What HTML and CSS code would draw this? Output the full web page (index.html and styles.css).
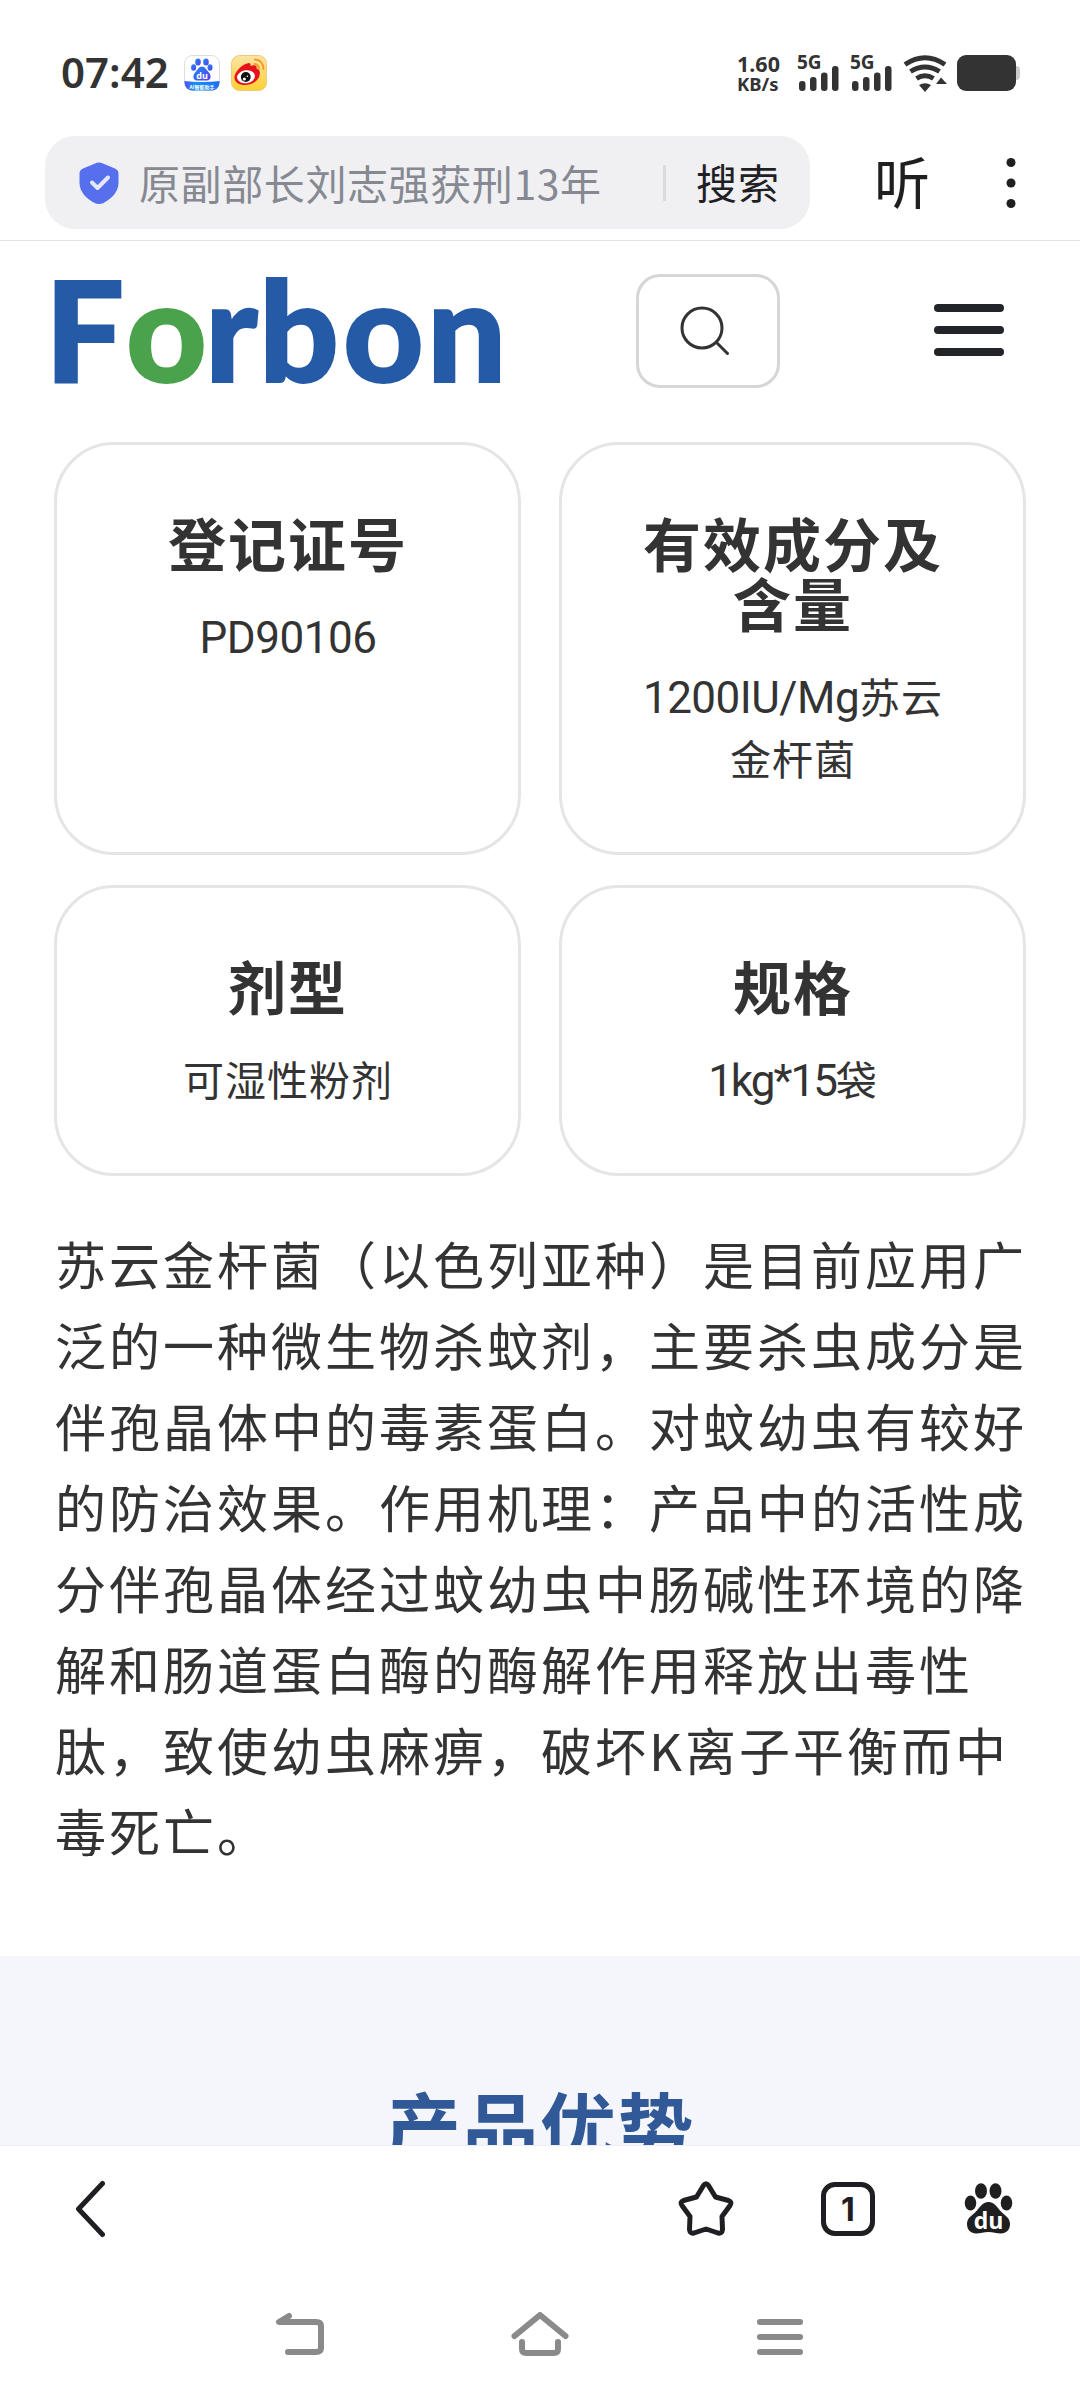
FILE: index.html
```html
<!DOCTYPE html>
<html lang="zh-CN">
<head>
  <meta charset="UTF-8">
  <meta name="viewport" content="width=device-width, initial-scale=1.0">
  <title>Forbon</title>
  <link rel="stylesheet" href="styles.css">
</head>
<body>
  <div class="screen">
    <div class="status-bar">
      <span class="clock">07:42</span>
      <svg class="app-icon" width="36" height="36" viewBox="0 0 36 36">
        <defs>
          <linearGradient id="du-paw" x1="0" y1="0" x2="1" y2="1">
            <stop offset="0" stop-color="#1a8cf5"/>
            <stop offset="1" stop-color="#5a3df0"/>
          </linearGradient>
          <linearGradient id="du-band" x1="0" y1="0" x2="1" y2="0">
            <stop offset="0" stop-color="#5a4cf0"/>
            <stop offset="0.3" stop-color="#1590f5"/>
            <stop offset="1" stop-color="#1f6df5"/>
          </linearGradient>
          <clipPath id="du-clip"><rect x="0.5" y="0.5" width="35" height="35" rx="8"/></clipPath>
        </defs>
        <rect x="0.5" y="0.5" width="35" height="35" rx="8" fill="#fff" stroke="#ddd"/>
        <path clip-path="url(#du-clip)" d="M0 26Q18 28 36 26V36H0Z" fill="url(#du-band)"/>
        <g fill="url(#du-paw)">
          <ellipse cx="14" cy="7" rx="2.8" ry="3.6"/>
          <ellipse cx="22" cy="7" rx="2.8" ry="3.6"/>
          <ellipse cx="9.6" cy="12.5" rx="2.5" ry="3.2"/>
          <ellipse cx="26" cy="12.5" rx="2.5" ry="3.2"/>
          <path d="M18 11.500c-3 0-4 3-6.500 5.500-3 3-3 8.500 1.500 8.500 3 0 7 0 10 0 4.500 0 4.500-5.500 1.500-8.500-2.500-2.500-3.500-5.500-6.500-5.500z"/>
        </g>
        <text x="18" y="23.500" class="du-small">du</text>
        <text x="18" y="33.500" class="du-band-text">AI智能助手</text>
      </svg>
      <svg class="app-icon" width="36" height="36" viewBox="0 0 36 36">
        <defs>
          <linearGradient id="wb-bg" x1="0" y1="0" x2="0" y2="1">
            <stop offset="0" stop-color="#fbe4a6"/>
            <stop offset="1" stop-color="#fdd12f"/>
          </linearGradient>
        </defs>
        <rect x="0.5" y="0.5" width="35" height="35" rx="8" fill="url(#wb-bg)" stroke="#eccb7a"/>
        <path d="M16 8.500c3-1.500 4 .5 3.500 2.500 3-1.500 7-1 6 2.500 3 1 4 3 3 7-1.500 6-8 9.500-14.500 9.500-6 0-11-3-10.500-8 .5-5.500 7-12 12.500-13.500z" fill="#e8121c"/>
        <ellipse cx="15" cy="21.800" rx="9" ry="6.500" fill="#fff" transform="rotate(-8 15 21.800)"/>
        <circle cx="14.800" cy="22" r="4.900" fill="#111"/>
        <circle cx="13.400" cy="24" r="1.500" fill="#fff"/>
        <circle cx="16.400" cy="21.300" r=".8" fill="#fff"/>
        <path d="M24 4.500q8 .5 8.500 9.500M23.500 9q4 .5 4.500 4.500" fill="none" stroke="#f29a2e" stroke-width="2" stroke-linecap="round"/>
      </svg>
      <div class="status-right">
        <div class="net-speed"><span>1.60</span><span>KB/s</span></div>
        <div class="signal">
          <span class="signal-label">5G</span>
          <svg width="42" height="38" viewBox="0 0 42 38" fill="#333">
            <rect x="2" y="27" width="6.500" height="10" rx="3"/>
            <rect x="13" y="23" width="6.500" height="14" rx="3"/>
            <rect x="24" y="18.500" width="6.500" height="18.500" rx="3"/>
            <rect x="35" y="12" width="6.500" height="25" rx="3"/>
          </svg>
        </div>
        <div class="signal">
          <span class="signal-label">5G</span>
          <svg width="42" height="38" viewBox="0 0 42 38" fill="#333">
            <rect x="2" y="27" width="6.500" height="10" rx="3"/>
            <rect x="13" y="23" width="6.500" height="14" rx="3"/>
            <rect x="24" y="18.500" width="6.500" height="18.500" rx="3"/>
            <rect x="35" y="12" width="6.500" height="25" rx="3"/>
          </svg>
        </div>
        <svg class="wifi" width="45" height="37" viewBox="0 0 45 37">
          <path d="M2 9.500Q22 -4 42 9.500M7.500 16.500Q22 7.500 36.500 16.500M13.500 23.500Q22 18 30.500 23.500" fill="none" stroke="#333" stroke-width="5"/>
          <path d="M16 30Q22 26.500 28 30L22 37ZM33 29L38 22.500L44 29Z" fill="#333"/>
        </svg>
        <div class="battery"></div>
        <div class="battery-tip"></div>
      </div>
    </div>

    <div class="browser-bar">
      <div class="search-box">
        <svg class="shield" width="40" height="42" viewBox="0 0 40 42">
          <path d="M16 1.500Q20-.5 24 1.500L36 6.500Q39.500 8 39.500 11.500V21C39.500 31 31 37.500 24.500 41Q20 43 15.500 41C9 37.500.5 31 .5 21V11.500Q.5 8 4 6.500Z" fill="#566fed"/>
          <path d="M13 20.500L18.500 26L29 15.500" fill="none" stroke="#e3e8ff" stroke-width="4" stroke-linecap="round" stroke-linejoin="round"/>
        </svg>
        <span class="search-text">原副部长刘志强获刑13年</span>
        <span class="search-divider"></span>
        <span class="search-btn">搜索</span>
      </div>
      <span class="listen">听</span>
      <svg class="more" width="10" height="52" viewBox="0 0 10 52" fill="#1f1f1f">
        <circle cx="5" cy="5.500" r="4.500"/>
        <circle cx="5" cy="26" r="4.500"/>
        <circle cx="5" cy="46.500" r="4.500"/>
      </svg>
    </div>

    <div class="site-header">
      <svg class="logo" width="460" height="130" viewBox="0 0 460 130">
        <text class="logo-text" x="-9 72 151 205 289 373" y="108">F<tspan class="logo-green">o</tspan>rbon</text>
      </svg>
      <button class="site-search">
        <svg width="50" height="50" viewBox="0 0 50 50" fill="none" stroke="#333" stroke-width="3" stroke-linecap="round">
          <circle cx="22" cy="22" r="20"/>
          <path d="M36.500 36.500L47.500 47.500"/>
        </svg>
      </button>
      <div class="hamburger"><span></span><span></span><span></span></div>
    </div>

    <div class="content">
      <div class="cards">
        <div class="card">
          <h3>登记证号</h3>
          <p><span class="latin">PD90106</span></p>
        </div>
        <div class="card">
          <h3>有效成分及<br>含量</h3>
          <p><span class="latin">1200IU/Mg</span>苏云<br>金杆菌</p>
        </div>
        <div class="card">
          <h3>剂型</h3>
          <p>可湿性粉剂</p>
        </div>
        <div class="card">
          <h3>规格</h3>
          <p><span class="latin spec">1kg*15</span>袋</p>
        </div>
      </div>
      <p class="intro">苏云金杆菌（以色列亚种）是目前应用广<br>泛的一种微生物杀蚊剂，主要杀虫成分是<br>伴孢晶体中的毒素蛋白。对蚊幼虫有较好<br>的防治效果。作用机理：产品中的活性成<br>分伴孢晶体经过蚊幼虫中肠碱性环境的降<br>解和肠道蛋白酶的酶解作用释放出毒性<br>肽，致使幼虫麻痹，破坏K离子平衡而中<br>毒死亡。</p>
    </div>

    <div class="advantage">
      <h2>产品优势</h2>
    </div>

    <div class="toolbar">
      <svg width="30" height="58" viewBox="0 0 30 58" fill="none" stroke="#1f1f23" stroke-width="5" stroke-linecap="round" stroke-linejoin="round">
        <path d="M27.500 3.500L3.500 29L27.500 54.500"/>
      </svg>
      <div class="toolbar-right">
        <svg width="56" height="56" viewBox="0 0 56 56" fill="none" stroke="#1f1f23" stroke-width="5" stroke-linejoin="round">
          <path d="M25.500 4.500Q28 1 30.500 4.500L37.500 16L50.500 19.500Q54.500 21 52 24.500L44 35.500L44.500 48.500Q44 53 40 52L28 48L16 52Q12 53 11.500 48.500L12 35.500L4 24.500Q1.500 21 5.500 19.500L18.500 16Z"/>
        </svg>
        <div class="tab-count">1</div>
        <svg class="paw" width="50" height="54" viewBox="0 0 50 54" fill="#1f1f1f">
          <ellipse cx="17" cy="9" rx="6" ry="7.800"/>
          <ellipse cx="31.500" cy="9" rx="6" ry="7.800"/>
          <ellipse cx="6.500" cy="21" rx="5.800" ry="7.500"/>
          <ellipse cx="42.500" cy="21" rx="5.800" ry="7.500"/>
          <path d="M24.500 20c-6 0-9 6-13 10C7.500 34 3 36 3 42c0 6 4 9.500 9 9.500 5 0 7.500-1.500 12.500-1.500s7.500 1.500 12.500 1.500c5 0 9-3.500 9-9.500 0-6-4.500-8-8.500-12-4-4-7-10-13-10z"/>
          <text x="24.500" y="46.500" class="du-text">du</text>
        </svg>
      </div>
    </div>

    <div class="nav-bar">
      <svg width="50" height="44" viewBox="0 0 50 44" fill="none" stroke="#8a8a8a" stroke-width="6" stroke-linecap="round" stroke-linejoin="round">
        <path d="M14 4L4 10H41Q46 10 46 14V36Q46 40 41 40H13"/>
      </svg>
      <svg class="nav-home" width="60" height="46" viewBox="0 0 60 46" fill="none" stroke="#8a8a8a" stroke-width="6" stroke-linecap="round" stroke-linejoin="round">
        <path d="M4.500 24L30 3L55.500 24M12 30V37Q12 41 16 41H44Q48 41 48 37V30"/>
      </svg>
      <div class="nav-menu"><span></span><span></span><span></span></div>
    </div>
  </div>
</body>
</html>
```
FILE: styles.css
```css
* {
  margin: 0;
  padding: 0;
  box-sizing: border-box;
}

body {
  font-family: 'Noto Sans CJK SC', sans-serif;
  background: #ffffff;
  color: #333333;
}

svg {
  display: block;
  flex-shrink: 0;
}

.screen {
  width: 1080px;
  height: 2400px;
  display: flex;
  flex-direction: column;
  overflow: hidden;
  background: #ffffff;
}

/* phone status bar */
.status-bar {
  height: 110px;
  padding: 35px 60px 0 61px;
  display: flex;
  align-items: flex-start;
  flex-shrink: 0;
}

.clock {
  width: 123px;
  height: 74px;
  line-height: 74px;
  font-family: 'Noto Sans', sans-serif;
  font-size: 42px;
  font-weight: 600;
}

.app-icon {
  margin-top: 20px;
  margin-right: 11px;
}

.du-small {
  font: 700 9px 'Noto Sans', sans-serif;
  fill: #ffffff;
  text-anchor: middle;
}

.du-band-text {
  font: 700 5px 'Noto Sans CJK SC', sans-serif;
  fill: #ffffff;
  text-anchor: middle;
}

.status-right {
  margin-left: auto;
  margin-top: 19px;
  display: flex;
}

.net-speed {
  width: 60px;
  display: flex;
  flex-direction: column;
  font-family: 'Noto Sans', sans-serif;
  font-weight: 700;
  font-size: 21.5px;
  line-height: 19px;
}

.net-speed span:last-child {
  font-size: 18.5px;
  line-height: 21px;
}

.signal {
  position: relative;
  width: 53px;
}

.signal-label {
  position: absolute;
  left: 0;
  top: -1px;
  font-family: 'Noto Sans', sans-serif;
  font-weight: 700;
  font-size: 19px;
  line-height: 19px;
}

.wifi {
  margin-top: 1px;
}

.battery {
  width: 59px;
  height: 36px;
  margin-top: 1px;
  margin-left: 9px;
  border-radius: 9px;
  background: #333333;
}

.battery-tip {
  width: 4px;
  height: 14px;
  margin-top: 12px;
  border-radius: 0 4px 4px 0;
  background: #cccccc;
}

/* browser address bar */
.browser-bar {
  height: 131px;
  padding: 26px 64px 11px 45px;
  display: flex;
  align-items: flex-start;
  flex-shrink: 0;
  border-bottom: 1px solid #e3e3e3;
}

.search-box {
  width: 765px;
  height: 93px;
  padding-left: 34px;
  display: flex;
  align-items: center;
  border-radius: 30px;
  background: #f0f0f3;
}

.search-text {
  width: 524px;
  margin-left: 20px;
  font-size: 41px;
  line-height: 93px;
  letter-spacing: 0.6px;
  color: #868991;
  white-space: nowrap;
}

.search-divider {
  width: 3px;
  height: 36px;
  background: #dadbe0;
}

.search-btn {
  margin-left: 30px;
  margin-top: -4px;
  font-size: 41px;
  letter-spacing: 1px;
  color: #1f1f25;
}

.listen {
  width: 60px;
  margin-left: 64px;
  font-size: 56px;
  line-height: 88px;
  color: #1f1f1f;
}

.more {
  margin-top: 21px;
  margin-left: auto;
}

/* site header */
.site-header {
  height: 201px;
  padding: 33px 76px 0 54px;
  display: flex;
  align-items: flex-start;
  flex-shrink: 0;
}

.logo {
  overflow: visible;
}

.logo-text {
  font-family: 'Lato', sans-serif;
  font-weight: 900;
  font-size: 140px;
  fill: #255aa6;
  stroke: #255aa6;
  stroke-width: 2px;
}

.logo-green {
  fill: #4aa24c;
  stroke: #4aa24c;
}

.site-search {
  width: 144px;
  height: 114px;
  margin-left: 122px;
  padding-right: 6px;
  display: flex;
  align-items: center;
  justify-content: center;
  border: 3px solid #d6d6d6;
  border-radius: 24px;
  background: #ffffff;
}

.hamburger {
  width: 70px;
  margin-top: 30px;
  margin-left: auto;
  display: flex;
  flex-direction: column;
  gap: 14px;
}

.hamburger span {
  height: 8px;
  border-radius: 4px;
  background: #212529;
}

/* product info */
.content {
  height: 1514px;
  padding: 0 54px;
  flex-shrink: 0;
}

.cards {
  display: grid;
  grid-template-columns: 1fr 1fr;
  gap: 30px 38px;
}

.card {
  padding: 67px 40px 64px 41px;
  border: 3px solid #e5e5e5;
  border-radius: 60px;
  text-align: center;
}

.card h3 {
  margin-bottom: 32px;
  font-size: 58px;
  line-height: 60px;
  letter-spacing: 2px;
  font-weight: 700;
}

.card p {
  font-size: 41px;
  line-height: 62px;
  letter-spacing: 1px;
}

.card .latin {
  font-family: 'Roboto', sans-serif;
  font-size: 44px;
  line-height: 1;
  letter-spacing: -0.5px;
}

.card .spec {
  letter-spacing: -2px;
}

.intro {
  margin-top: 47px;
  padding-left: 1px;
  font-size: 51px;
  line-height: 81px;
  letter-spacing: 3px;
  white-space: nowrap;
}

.advantage {
  height: 190px;
  padding-top: 118px;
  flex-shrink: 0;
  overflow: hidden;
  background: #f4f6fb;
  border-bottom: 1px solid #eeeff2;
}

.advantage h2 {
  font-size: 76px;
  line-height: 100px;
  letter-spacing: 1.5px;
  font-weight: 700;
  color: #315997;
  text-align: center;
}

/* browser toolbar */
.toolbar {
  height: 126px;
  padding: 0 66px 0 75px;
  display: flex;
  align-items: center;
  justify-content: space-between;
  flex-shrink: 0;
}

.toolbar-right {
  display: flex;
  align-items: center;
  gap: 87px;
}

.paw {
  margin-left: 2px;
}

.tab-count {
  width: 54px;
  height: 54px;
  border: 5px solid #1f1f23;
  border-radius: 14px;
  font-family: 'Inter', sans-serif;
  font-weight: 700;
  font-size: 32px;
  line-height: 45px;
  text-align: center;
  color: #1f1f23;
}

.du-text {
  font: 700 23px 'Open Sans', sans-serif;
  fill: #ffffff;
  text-anchor: middle;
}

/* system navigation */
.nav-bar {
  height: 128px;
  padding: 40px 277px 0 275px;
  display: flex;
  align-items: flex-start;
  justify-content: space-between;
  flex-shrink: 0;
}

.nav-home {
  margin-right: 2px;
}

.nav-menu {
  width: 46px;
  margin-top: 7px;
  display: flex;
  flex-direction: column;
  gap: 9px;
}

.nav-menu span {
  height: 6px;
  border-radius: 3px;
  background: #8a8a8a;
}
```
